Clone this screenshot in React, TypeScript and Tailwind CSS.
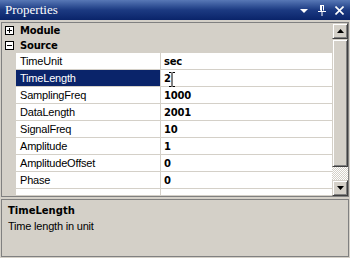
import React from "react";

interface Prop {
  name: string;
  value: string;
}

const props: Prop[] = [
  { name: "TimeUnit", value: "sec" },
  { name: "TimeLength", value: "2" },
  { name: "SamplingFreq", value: "1000" },
  { name: "DataLength", value: "2001" },
  { name: "SignalFreq", value: "10" },
  { name: "Amplitude", value: "1" },
  { name: "AmplitudeOffset", value: "0" },
  { name: "Phase", value: "0" },
];

const bevel =
  "bg-[#d4d0c8] border border-t-[#d4d0c8] border-l-[#d4d0c8] border-b-[#404040] border-r-[#404040] shadow-[inset_1px_1px_#ffffff,inset_-1px_-1px_#808080] flex items-center justify-center";

function ToggleBox({ open }: { open: boolean }) {
  return (
    <div className="relative w-[9px] h-[9px] border border-black bg-white">
      <div className="absolute left-[1px] top-[3px] w-[5px] h-[1px] bg-black" />
      {!open && <div className="absolute left-[3px] top-[1px] w-[1px] h-[5px] bg-black" />}
    </div>
  );
}

function Category({ label, open, h }: { label: string; open: boolean; h: string }) {
  return (
    <div className={`flex items-center ${h} bg-[#d4d0c8]`}>
      <div className="w-[14px] flex justify-center pl-[1px]">
        <ToggleBox open={open} />
      </div>
      <span className="pl-[4px] font-['DejaVu_Sans',sans-serif] font-bold text-[10px] text-black">
        {label}
      </span>
    </div>
  );
}

function Row({ p, selected }: { p: Prop; selected?: boolean }) {
  return (
    <div className="flex h-[17px] bg-[#d4d0c8]">
      <div className="w-[14px] shrink-0" />
      <div
        className={`w-[144px] shrink-0 border-b border-[#d4d0c8] pl-[4px] flex items-center ${
          selected ? "bg-[#0a246a] text-white" : "bg-white text-black"
        }`}
      >
        {p.name}
      </div>
      <div className="w-[1px] shrink-0 bg-[#d4d0c8]" />
      <div className="relative flex-1 bg-white border-b border-[#d4d0c8] pl-[3px] flex items-center font-['DejaVu_Sans',sans-serif] font-bold text-[10px]">
        {p.value}
        {selected && (
          <svg className="absolute left-[8px] top-[2px]" width="6" height="15" viewBox="0 0 6 15">
            <path d="M0 0.5h2.5M3.5 0.5h2.5M3 1v13M0 14.5h2.5M3.5 14.5h2.5" stroke="#000" strokeWidth="1" />
          </svg>
        )}
      </div>
    </div>
  );
}

export default function App() {
  return (
    <div className="w-[350px] h-[258px] bg-[#d4d0c8] flex flex-col font-['Liberation_Sans',Arial,sans-serif] text-[11px] tracking-[-0.2px] overflow-hidden">
      <div className="h-[20px] shrink-0 flex items-center bg-gradient-to-b from-[#5878b6] via-[#1c3a82] to-[#0a246a] pl-[5px] pr-[6px]">
        <span className="font-['Liberation_Serif',serif] text-[13px] tracking-normal text-white">Properties</span>
        <div className="ml-auto flex items-center">
          <svg width="8" height="5" viewBox="0 0 8 5" className="mr-[10px] mt-[2px]">
            <path d="M0 0h8L4 4z" fill="#fff" />
          </svg>
          <svg width="8" height="11" viewBox="0 0 8 11" className="mr-[9px]">
            <path d="M2 0.5h4M2.5 0.5v5M5.5 0.5v5M0 6.5h8M4 7v4" stroke="#fff" strokeWidth="1" fill="none" />
            <path d="M3 1h1v5h-1z" fill="#fff" />
          </svg>
          <svg width="9" height="9" viewBox="0 0 9 9">
            <path d="M0.5 0.5L8.5 8.5M8.5 0.5L0.5 8.5" stroke="#fff" strokeWidth="1.6" />
          </svg>
        </div>
      </div>

      <div className="px-[1px] pt-[2px]">
        <div className="h-[175px] border border-[#808080] flex">
          <div className="flex-1 flex flex-col overflow-hidden">
            <Category label="Module" open={false} h="h-[17px]" />
            <Category label="Source" open h="h-[18px]" />
            {props.map((p) => (
              <Row key={p.name} p={p} selected={p.name === "TimeLength"} />
            ))}
            <Row p={{ name: "", value: "" }} />
          </div>
          <div className="w-[16px] shrink-0 flex flex-col">
            <div className={`h-[16px] ${bevel}`}>
              <svg width="7" height="4" viewBox="0 0 7 4">
                <path d="M3.5 0L7 4H0z" fill="#000" />
              </svg>
            </div>
            <div className={`h-[128px] ${bevel}`} />
            <div className="flex-1 bg-[conic-gradient(#ffffff_25%,#d4d0c8_0_50%,#ffffff_0_75%,#d4d0c8_0)] bg-size-[2px_2px]" />
            <div className={`h-[16px] ${bevel}`}>
              <svg width="7" height="4" viewBox="0 0 7 4">
                <path d="M0 0h7L3.5 4z" fill="#000" />
              </svg>
            </div>
          </div>
        </div>
      </div>

      <div className="px-[1px] pt-[2px] pb-[1px] flex-1 flex">
        <div className="flex-1 border border-[#808080] pl-[6px] pt-[4px] flex flex-col">
          <span className="font-['DejaVu_Sans',sans-serif] font-bold text-[10px] tracking-normal leading-[13px] text-black">
            TimeLength
          </span>
          <span className="mt-[3px] leading-[13px] text-black">Time length in unit</span>
        </div>
      </div>
    </div>
  );
}
